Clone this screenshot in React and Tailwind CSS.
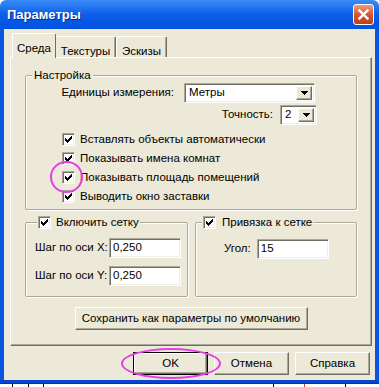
import React from "react";

const raised =
  "border border-t-white border-l-white border-r-[#716F64] border-b-[#716F64] shadow-[inset_-1px_-1px_0_#ACA899]";
const sunken =
  "border border-t-[#ACA899] border-l-[#ACA899] border-r-white border-b-white shadow-[inset_1px_1px_0_#716F64,inset_-1px_-1px_0_#F1EFE2]";
const group =
  "border border-[#ACA899] shadow-[inset_1px_1px_0_#fff,1px_1px_0_#fff] rounded-[2px]";

function Check() {
  return (
    <span className={`w-[13px] h-[13px] shrink-0 bg-white flex items-center justify-center ${sunken}`}>
      <svg width="7" height="7" viewBox="0 0 7 7" shapeRendering="crispEdges">
        <path
          d="M0 2h1v3H0zM1 3h1v3H1zM2 4h1v3H2zM3 3h1v3H3zM4 2h1v3H4zM5 1h1v3H5zM6 0h1v3H6z"
          fill="#000"
        />
      </svg>
    </span>
  );
}

function Combo({ value, width }) {
  return (
    <div className={`h-[20px] shrink-0 bg-white flex items-center p-[2px] ${sunken} ${width}`}>
      <span className="flex-1 pl-[2px] leading-none">{value}</span>
      <span className={`w-[16px] h-full bg-[#ECE9D8] flex items-center justify-center ${raised}`}>
        <svg width="7" height="4" viewBox="0 0 7 4" shapeRendering="crispEdges">
          <path d="M0 0h7v1H0zM1 1h5v1H1zM2 2h3v1H2zM3 3h1v1H3z" fill="#000" />
        </svg>
      </span>
    </div>
  );
}

function Edit({ value }) {
  return (
    <div className={`w-[72px] h-[20px] shrink-0 bg-white flex items-center pl-[3px] ${sunken}`}>
      {value}
    </div>
  );
}

function Button({ children, def, className = "" }) {
  const inner = (
    <div className={`h-full w-full bg-[#ECE9D8] flex items-center justify-center ${raised}`}>
      {children}
    </div>
  );
  if (def) {
    return <div className={`border border-black ${className}`}>{inner}</div>;
  }
  return <div className={className}>{inner}</div>;
}

function CheckRow({ label }) {
  return (
    <div className="h-[19px] flex items-center gap-[5px] pl-[36px]">
      <Check />
      <span>{label}</span>
    </div>
  );
}

export default function App() {
  return (
    <div className="relative w-[379px] h-[387px] bg-white overflow-hidden font-['Liberation_Sans',Arial,sans-serif] text-[11.5px] text-black whitespace-nowrap">
      {/* title bar */}
      <div className="h-[29px] flex items-center justify-between pl-[7px] pr-[5px] rounded-t-[6px] bg-linear-to-b from-[#3A8CF7] via-[#0A5EE8] to-[#0052DE]">
        <span className="text-white font-bold text-[13px] [text-shadow:1px_1px_#0A2A8A]">
          Параметры
        </span>
        <div className="w-[21px] h-[21px] rounded-[3px] border border-white bg-linear-to-b from-[#E99C7E] via-[#D9552F] to-[#C23E1A] flex items-center justify-center">
          <svg width="11" height="11" viewBox="0 0 11 11">
            <path d="M1.5 1.5l8 8M9.5 1.5l-8 8" stroke="#fff" strokeWidth="2.4" strokeLinecap="square" />
          </svg>
        </div>
      </div>

      {/* body */}
      <div className="h-[351px] bg-[#ECE9D8] border-l-4 border-r-4 border-[#0A55E2] flex flex-col pt-[4px] pl-[6px] pr-[3px]">
        {/* tabs */}
        <div className="h-[24px] flex items-end pl-[2px]">
          <div className="relative z-10 h-[25px] w-[44px] -mb-[1px] bg-[#ECE9D8] border-t border-l border-t-white border-l-white border-r border-r-[#716F64] rounded-tl-[2px] rounded-tr-[2px] flex justify-center pt-[6px]">
            Среда
          </div>
          <div className="h-[21px] w-[60px] border-t border-t-white border-r border-r-[#716F64] shadow-[inset_-1px_0_0_#ACA899] rounded-tr-[2px] flex justify-center pt-[6px]">
            Текстуры
          </div>
          <div className="h-[21px] w-[51px] border-t border-l border-t-white border-l-white border-r border-r-[#716F64] shadow-[inset_-1px_0_0_#ACA899] rounded-t-[2px] flex justify-center pt-[6px]">
            Эскизы
          </div>
        </div>

        {/* tab panel */}
        <div className={`h-[289px] flex flex-col pt-[10px] pl-[14px] pr-[14px] ${raised}`}>
          <fieldset className={`w-[332px] pb-[3px] ${group}`}>
            <legend className="ml-[6px] px-[2px] leading-[14px] bg-[#ECE9D8]">Настройка</legend>
            <div className="flex items-center justify-end mt-[1px] pr-[41px] gap-[10px]">
              <span>Единицы измерения:</span>
              <Combo value="Метры" width="w-[131px]" />
            </div>
            <div className="flex items-center justify-end mt-[2px] pr-[39px] gap-[7px]">
              <span>Точность:</span>
              <Combo value="2" width="w-[37px]" />
            </div>
            <div className="mt-[5px]">
              <CheckRow label="Вставлять объекты автоматически" />
              <CheckRow label="Показывать имена комнат" />
              <CheckRow label="Показывать площадь помещений" />
              <CheckRow label="Выводить окно заставки" />
            </div>
          </fieldset>

          <div className="flex gap-[7px] mt-[5px]">
            <fieldset className={`w-[163px] pb-[10px] ${group}`}>
              <legend className="ml-[11px] px-[1px] leading-[14px] bg-[#ECE9D8] flex items-center gap-[5px]">
                <Check />
                <span>Включить сетку</span>
              </legend>
              <div className="flex items-center justify-between mt-[9px] pl-[9px] pr-[6px]">
                <span>Шаг по оси X:</span>
                <Edit value="0,250" />
              </div>
              <div className="flex items-center justify-between mt-[8px] pl-[9px] pr-[6px]">
                <span>Шаг по оси Y:</span>
                <Edit value="0,250" />
              </div>
            </fieldset>
            <fieldset className={`w-[162px] ${group}`}>
              <legend className="ml-[6px] px-[1px] leading-[14px] bg-[#ECE9D8] flex items-center gap-[6px]">
                <Check />
                <span>Привязка к сетке</span>
              </legend>
              <div className="flex items-center gap-[6px] mt-[10px] pl-[28px]">
                <span>Угол:</span>
                <Edit value="15" />
              </div>
            </fieldset>
          </div>

          <Button className="w-[233px] h-[23px] mx-auto mt-[10px]">
            Сохранить как параметры по умолчанию
          </Button>
        </div>

        {/* dialog buttons */}
        <div className="flex justify-end gap-[6px] mt-[6px] pr-[2px]">
          <Button def className="w-[75px] h-[23px]">OK</Button>
          <Button className="w-[75px] h-[23px]">Отмена</Button>
          <Button className="w-[75px] h-[23px]">Справка</Button>
        </div>
      </div>

      {/* bottom frame edge */}
      <div className="h-[4px] bg-[#0846D2] border-b border-[#06309A]" />
      <div className="h-[3px] flex">
        <div className="w-px bg-black ml-[12px]" />
        <div className="w-px bg-black ml-[15px]" />
        <div className="w-px bg-black ml-[14px]" />
        <div className="w-px bg-black ml-[229px]" />
        <div className="w-px bg-[#D04040] ml-[30px]" />
        <div className="w-px bg-black ml-[40px]" />
      </div>

      {/* magenta highlight marks */}
      <div className="absolute left-[50px] top-[161px] w-[33px] h-[32px] rounded-full border-2 border-[#E53DE5]" />
      <div className="absolute left-[121px] top-[348px] w-[100px] h-[31px] rounded-[50%] border-2 border-[#E53DE5]" />
    </div>
  );
}
